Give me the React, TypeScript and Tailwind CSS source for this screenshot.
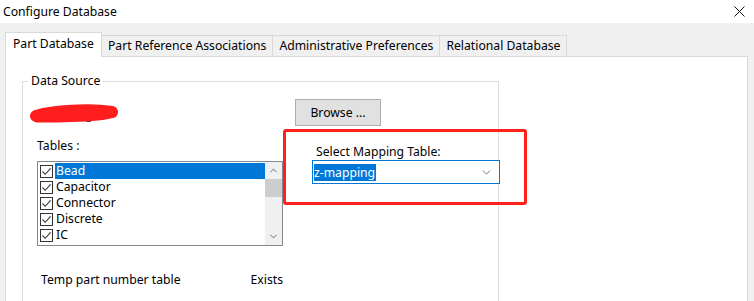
import { ChevronDown, ChevronUp } from 'lucide-react';

const TABS = ['Part Database', 'Part Reference Associations', 'Administrative Preferences', 'Relational Database'];
const TABLES = ['Bead', 'Capacitor', 'Connector', 'Discrete', 'IC'];

function CheckBox() {
  return (
    <span className="w-[13px] h-[13px] border border-[#333] bg-white flex items-center justify-center shrink-0">
      <svg width="11" height="11" viewBox="0 0 11 11">
        <path d="M1.5 5.5 L4.2 8.3 L9.6 2.3" fill="none" stroke="#333" strokeWidth="1.1" />
      </svg>
    </span>
  );
}

function TableList() {
  return (
    <div className="w-[246px] h-[85px] border border-[#828790] bg-white flex">
      <div className="flex-1 pt-px">
        {TABLES.map((t, i) => (
          <div key={t} className="h-[16px] flex items-center pl-[2px]">
            <CheckBox />
            <span
              className={
                'ml-[2px] flex-1 h-[16px] leading-[16px] pl-px ' +
                (i === 0 ? 'bg-[#0078d7] text-white' : 'text-black')
              }
            >
              {t}
            </span>
          </div>
        ))}
      </div>
      <div className="w-[17px] bg-[#f0f0f0] flex flex-col">
        <div className="h-[17px] flex items-center justify-center text-[#606060]">
          <ChevronUp size={11} strokeWidth={2} />
        </div>
        <div className="h-[18px] bg-[#cdcdcd]" />
        <div className="flex-1" />
        <div className="h-[17px] flex items-center justify-center text-[#606060]">
          <ChevronDown size={11} strokeWidth={2} />
        </div>
      </div>
    </div>
  );
}

export default function App() {
  return (
    <div className="w-[754px] h-[301px] overflow-hidden bg-[#f0f0f0] text-black text-[12.2px] font-['Noto_Sans',sans-serif]">
      <div className="h-[23px] bg-white flex items-center justify-between pl-[3px] pr-[9px]">
        <span className="text-[12.2px] leading-[16px]">Configure Database</span>
        <svg width="11" height="11" viewBox="0 0 11 11">
          <path d="M0.5 0.5 L10.5 10.5 M10.5 0.5 L0.5 10.5" stroke="#111" strokeWidth="1" />
        </svg>
      </div>

      <div className="pt-[9px] pl-[5px] flex items-end relative z-10">
        {TABS.map((t, i) =>
          i === 0 ? (
            <div key={t} className="h-[25px] w-[97px] bg-white border border-b-0 border-[#d9d9d9] pl-[7px] leading-[20px] pt-[1px]">
              {t}
            </div>
          ) : (
            <div key={t} className="h-[22px] bg-[#f0f0f0] border border-l-0 border-[#d9d9d9] px-[6px] leading-[19px]">
              {t}
            </div>
          )
        )}
      </div>

      <div className="ml-[5px] w-[743px] h-[260px] -mt-px bg-white border border-[#d9d9d9]">
        <div className="ml-[16px] mt-[24px] w-[477px] h-[240px] border border-[#dcdcdc] relative flex">
          <span className="absolute -top-[9px] left-[5px] bg-white px-[3px] leading-[16px]">Data Source</span>

          <div className="w-[260px] pl-[5px] flex flex-col">
            <div className="mt-[20px] h-[22px] relative">
              <span className="absolute left-[58px] top-[8px] text-[11px] leading-[12px]">_</span>
              <svg width="92" height="22" viewBox="0 0 92 22" className="absolute left-0 top-0">
                <path d="M8 14 C 20 10, 34 9, 50 8.5 C 62 8, 74 8.5, 84 10 C 74 13, 60 13.5, 44 14 C 30 14.5, 18 14.5, 9 14.5" fill="none" stroke="#ff1d1d" strokeWidth="12" strokeLinecap="round" strokeLinejoin="round" />
              </svg>
            </div>
            <div className="pl-[9px] mt-[14px] leading-[16px]">Tables :</div>
            <div className="pl-[9px] mt-[7px]">
              <TableList />
            </div>
            <div className="mt-[26px] pl-[13px] flex leading-[16px]">
              <span className="w-[213px]">Temp part number table</span>
              <span>Exists</span>
            </div>
          </div>

          <div className="flex-1 relative flex flex-col">
            <button className="ml-[12px] mt-[17px] w-[86px] h-[27px] bg-[#e1e1e1] border border-[#adadad] leading-[16px]">
              Browse ...
            </button>
            <div className="ml-[33px] mt-[18px] leading-[16px]">Select Mapping Table:</div>
            <div className="ml-[29px] w-[188px] h-[24px] border border-[#0078d7] bg-white flex items-center justify-between pl-px pr-[6px]">
              <span className="bg-[#0078d7] text-white h-[17px] leading-[17px] pr-[1px]">z-mapping</span>
              <ChevronDown size={13} strokeWidth={1.5} className="text-[#555]" />
            </div>
            <div className="absolute left-0 top-[47px] w-[244px] h-[76px] border-[3px] border-[#ff2219] rounded-[3px]" />
          </div>
        </div>
      </div>
    </div>
  );
}
